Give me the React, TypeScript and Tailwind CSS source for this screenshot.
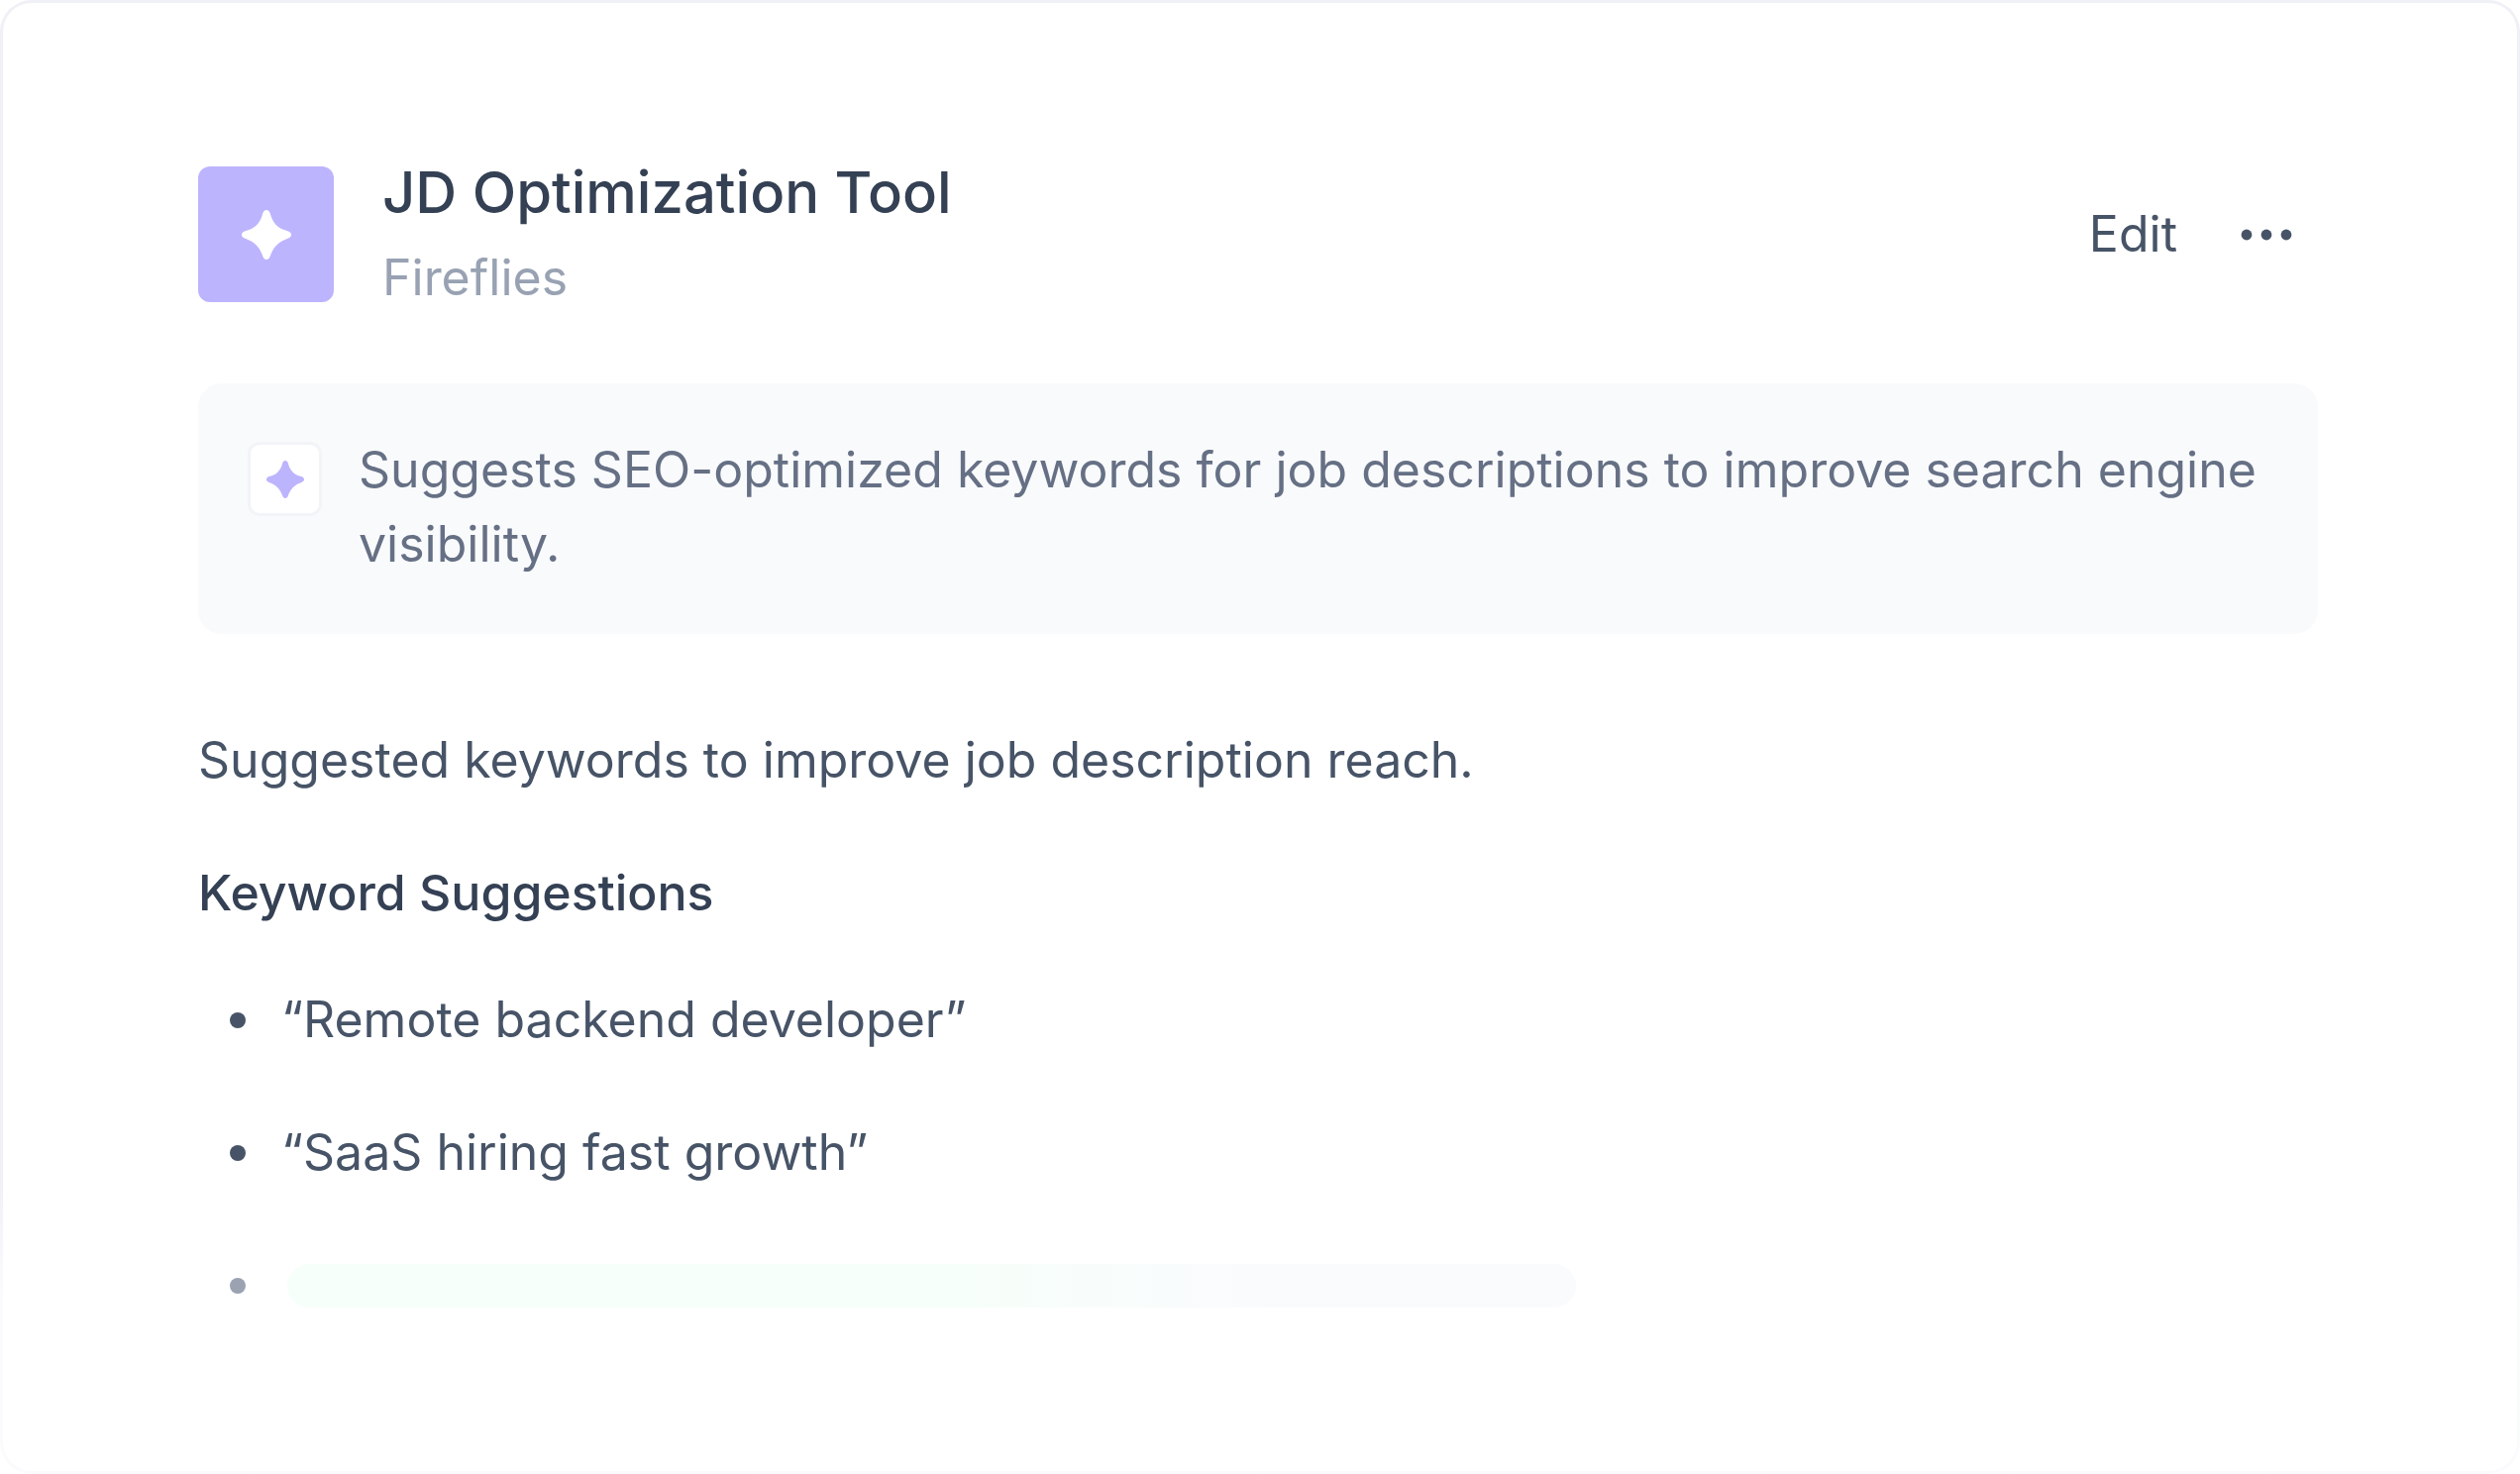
import clsx from "clsx";

const keywords = [
  { text: "“Remote backend developer”", loading: false },
  { text: "“SaaS hiring fast growth”", loading: false },
  { text: "", loading: true },
];

function Sparkle({ className }: { className?: string }) {
  return (
    <svg viewBox="0 0 50 50" fill="currentColor" className={className} aria-hidden="true">
      <path d="M25 0C27 0 28 1.300 28.700 3.200C31.300 13 36 18.500 46.500 21.200C48.800 22 50 23.200 50 25C50 26.800 48.800 28 46.500 28.800C37.500 32 32 37 28.700 46.800C28 48.700 27 50 25 50C23 50 22 48.700 21.300 46.800C18 37 12.500 32 3.500 28.800C1.200 28 0 26.800 0 25C0 23.200 1.200 22 3.500 21.200C14 18.500 18.700 13 21.300 3.200C22 1.300 23 0 25 0Z" />
    </svg>
  );
}

function Header() {
  return (
    <header className="flex items-center justify-between">
      <div className="flex items-center gap-[49px]">
        <div className="flex size-[137px] shrink-0 items-center justify-center rounded-xl bg-[#bdb4fe] text-white">
          <Sparkle className="size-[50px]" />
        </div>
        <div className="flex flex-col gap-2.5">
          <h1 className="text-[58px] leading-[78px] font-medium text-[#344054]">JD Optimization Tool</h1>
          <p className="text-[50px] leading-[75px] text-[#98a2b3]">Fireflies</p>
        </div>
      </div>

      <div className="flex items-center gap-16 pr-[26px] text-[#475467]">
        <button type="button" className="text-[50px] leading-[75px]">Edit</button>
        <button type="button" aria-label="More options">
          <svg viewBox="0 0 52 12" fill="currentColor" className="h-3 w-[52px]">
            <circle cx="6" cy="6" r="5.400" />
            <circle cx="26" cy="6" r="5.400" />
            <circle cx="46" cy="6" r="5.400" />
          </svg>
        </button>
      </div>
    </header>
  );
}

function Summary() {
  return (
    <section className="mt-[69px] flex items-start gap-[37px] rounded-3xl bg-[#f9fafc] px-[50px] pt-[50px] pb-[53px]">
      <div className="mt-[9px] flex size-[75px] shrink-0 items-center justify-center rounded-xl border-3 border-[#f2f4f7] bg-white text-[#bdb4fe]">
        <Sparkle className="size-[38px]" />
      </div>
      <p className="text-[50px] leading-[75px] text-[#667085]">
        Suggests SEO-optimized keywords for job descriptions to improve search engine visibility.
      </p>
    </section>
  );
}

export default function App() {
  return (
    <main className="min-h-screen rounded-[32px] bg-linear-to-b from-[#f0f1f6] from-80% to-[#fafbfd] to-88% p-[3px] font-['Inter',sans-serif]">
      <div className="min-h-[calc(100vh-6px)] rounded-[29px] bg-white pt-[152px] pr-[201px] pb-24 pl-[197px]">
        <Header />
        <Summary />

        <section className="text-[50px] leading-[75px] text-[#475467]">
          <p className="mt-[90px]">Suggested keywords to improve job description reach.</p>
          <h2 className="mt-[59px] font-medium text-[#344054]">Keyword Suggestions</h2>

          <ul className="mt-[53px] flex flex-col gap-[59px] pl-8">
            {keywords.map(({ text, loading }) => (
              <li key={text} className="flex h-[75px] items-center gap-9">
                <span className={clsx("size-4 shrink-0 rounded-full", loading ? "bg-[#9ba3b3]" : "bg-[#475467]")} />
                {loading ? (
                  <span className="ml-1.5 h-11 w-full max-w-[1301px] rounded-[22px] bg-linear-to-r from-[#f6fff9] from-50% to-[#fafbfd] to-75%" />
                ) : (
                  text
                )}
              </li>
            ))}
          </ul>
        </section>
      </div>
    </main>
  );
}
